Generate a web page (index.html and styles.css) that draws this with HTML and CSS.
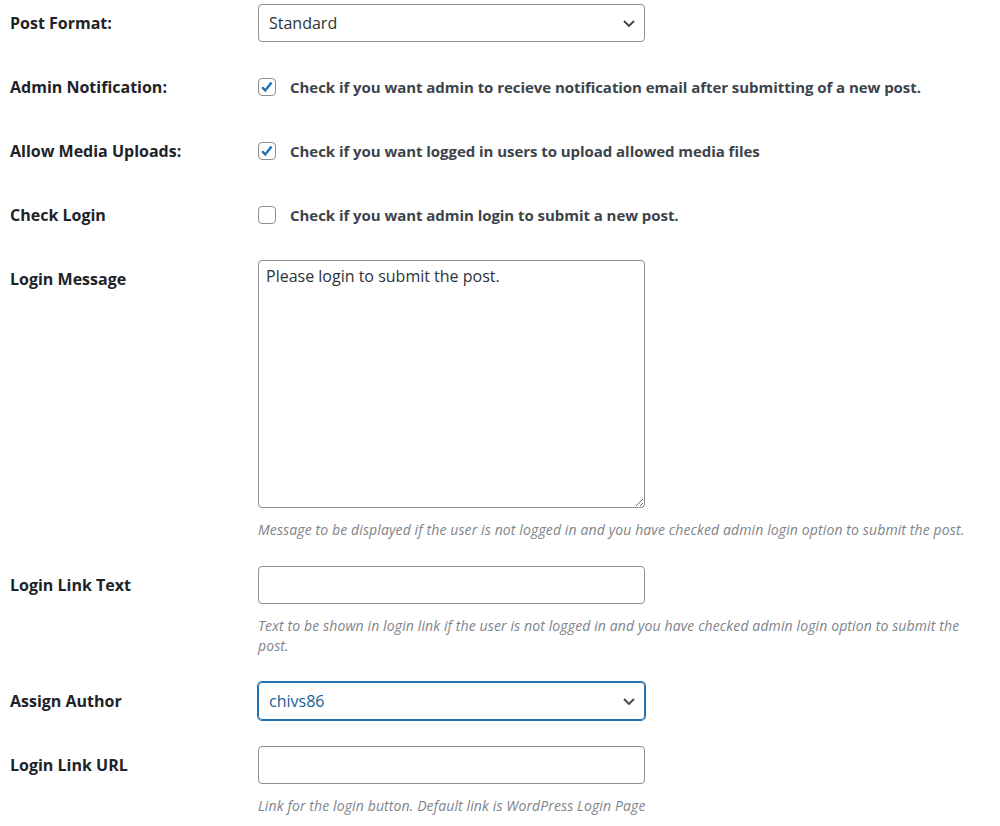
FILE: index.html
```html
<!DOCTYPE html>
<html>
<head>
<meta charset="utf-8">
<link rel="stylesheet" href="styles.css">
</head>
<body>
<div class="form">
  <div class="row">
    <div class="label">Post Format:</div>
    <div class="field">
      <div class="select"><span>Standard</span><svg class="chev" width="12" height="7" viewBox="0 0 12 7"><path d="M1 1l5 5 5-5" fill="none" stroke="#3c434a" stroke-width="1.8"/></svg></div>
    </div>
  </div>
  <div class="row">
    <div class="label">Admin Notification:</div>
    <div class="field check-row">
      <span class="cb"><svg width="16" height="16" viewBox="0 0 16 16"><path d="M3.2 8.2l3 3.2 6.4-8" fill="none" stroke="#2271b1" stroke-width="2.4"/></svg></span>
      <span class="check-text">Check if you want admin to recieve notification email after submitting of a new post.</span>
    </div>
  </div>
  <div class="row">
    <div class="label">Allow Media Uploads:</div>
    <div class="field check-row">
      <span class="cb"><svg width="16" height="16" viewBox="0 0 16 16"><path d="M3.2 8.2l3 3.2 6.4-8" fill="none" stroke="#2271b1" stroke-width="2.4"/></svg></span>
      <span class="check-text">Check if you want logged in users to upload allowed media files</span>
    </div>
  </div>
  <div class="row">
    <div class="label">Check Login</div>
    <div class="field check-row">
      <span class="cb"></span>
      <span class="check-text">Check if you want admin login to submit a new post.</span>
    </div>
  </div>
  <div class="row">
    <div class="label">Login Message</div>
    <div class="field">
      <textarea class="textarea">Please login to submit the post.</textarea>
      <p class="desc">Message to be displayed if the user is not logged in and you have checked admin login option to submit the post.</p>
    </div>
  </div>
  <div class="row">
    <div class="label">Login Link Text</div>
    <div class="field">
      <input class="input" type="text">
      <p class="desc">Text to be shown in login link if the user is not logged in and you have checked admin login option to submit the post.</p>
    </div>
  </div>
  <div class="row">
    <div class="label">Assign Author</div>
    <div class="field">
      <div class="select focus"><span>chivs86</span><svg class="chev" width="12" height="7" viewBox="0 0 12 7"><path d="M1 1l5 5 5-5" fill="none" stroke="#3c434a" stroke-width="1.8"/></svg></div>
    </div>
  </div>
  <div class="row">
    <div class="label">Login Link URL</div>
    <div class="field">
      <input class="input" type="text">
      <p class="desc">Link for the login button. Default link is WordPress Login Page</p>
    </div>
  </div>
</div>
</body>
</html>
```
FILE: styles.css
```css
body {
  margin: 0;
  background: #fff;
  font-family: "Open Sans", "Noto Sans", sans-serif;
  color: #1d2327;
}
.form {
  display: flex;
  flex-direction: column;
  gap: 26px;
  padding: 4px 0 0 10px;
}
.row {
  display: grid;
  grid-template-columns: 248px 720px;
  align-items: start;
}
.label {
  padding-top: 9px;
  line-height: 20px;
  font-size: 16px;
  font-weight: 700;
  color: #1d2327;
}
.select {
  box-sizing: border-box;
  width: 387px;
  height: 38px;
  border: 1px solid #8c8f94;
  border-radius: 4px;
  display: flex;
  align-items: center;
  justify-content: space-between;
  padding: 0 9px 0 10px;
  font-size: 16px;
  color: #2c3338;
}
.select.focus {
  border-color: #2271b1;
  box-shadow: 0 0 0 1px #2271b1;
  color: #135e96;
}
.chev {
  display: block;
}
.check-row {
  display: flex;
  align-items: center;
  height: 38px;
  gap: 14px;
}
.cb {
  box-sizing: border-box;
  width: 18px;
  height: 18px;
  border: 1px solid #8c8f94;
  border-radius: 4px;
  display: flex;
  align-items: center;
  justify-content: center;
  flex: none;
}
.cb svg {
  display: block;
}
.check-text {
  font-size: 15px;
  font-weight: 700;
  letter-spacing: -0.05px;
  color: #3c434a;
}
.textarea {
  display: block;
  box-sizing: border-box;
  width: 387px;
  height: 248px;
  margin: 0;
  border: 1px solid #8c8f94;
  border-radius: 4px;
  padding: 4px 7px;
  font-family: "Open Sans", "Noto Sans", sans-serif;
  font-size: 16px;
  line-height: 22px;
  color: #2c3338;
  background: #fff;
  resize: vertical;
}
.input {
  display: block;
  box-sizing: border-box;
  width: 387px;
  height: 38px;
  margin: 0;
  border: 1px solid #8c8f94;
  border-radius: 4px;
  padding: 0 8px;
  font-family: "Open Sans", "Noto Sans", sans-serif;
  font-size: 16px;
  background: #fff;
}
.desc {
  margin: 12px 0 0;
  font-size: 14px;
  font-style: italic;
  line-height: 20px;
  letter-spacing: 0.12px;
  color: #80848a;
}
```
